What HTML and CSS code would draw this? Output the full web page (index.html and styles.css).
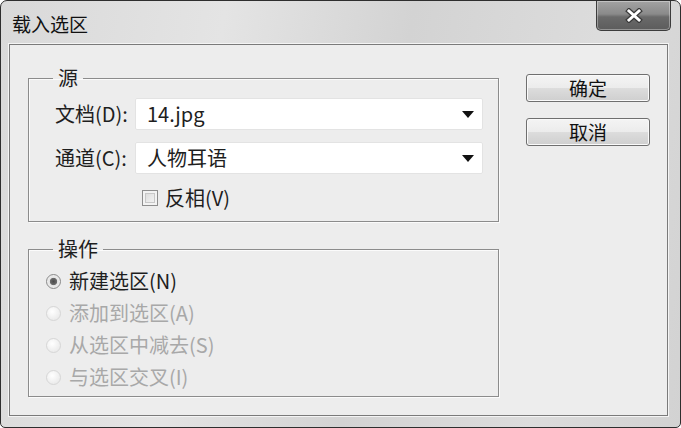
FILE: index.html
```html
<!DOCTYPE html>
<html lang="zh-CN">
<head>
  <meta charset="UTF-8">
  <title>载入选区</title>
  <link rel="stylesheet" href="styles.css">
</head>
<body>
  <div class="window">
    <div class="titlebar">
      <span class="title">载入选区</span>
      <button class="close-btn" aria-label="关闭">
        <svg width="18" height="15" viewBox="0 0 18 15">
          <path d="M4 3 L14 12 M14 3 L4 12" stroke="#3a3a3a" stroke-width="5.4" stroke-linecap="square"/>
          <path d="M4 3 L14 12 M14 3 L4 12" stroke="#ffffff" stroke-width="3" stroke-linecap="square"/>
        </svg>
      </button>
    </div>

    <div class="client">
      <div class="groups">
        <fieldset class="group">
          <legend>源</legend>
          <div class="field-grid">
            <label>文档(D):</label>
            <div class="select">
              <span>14.jpg</span>
              <span class="arrow"></span>
            </div>
            <label>通道(C):</label>
            <div class="select">
              <span>人物耳语</span>
              <span class="arrow"></span>
            </div>
            <div class="check-row">
              <span class="checkbox"></span>
              <span>反相(V)</span>
            </div>
          </div>
        </fieldset>

        <fieldset class="group">
          <legend>操作</legend>
          <div class="radio-list">
            <div class="radio-row">
              <span class="radio checked"></span>
              <span>新建选区(N)</span>
            </div>
            <div class="radio-row disabled">
              <span class="radio"></span>
              <span>添加到选区(A)</span>
            </div>
            <div class="radio-row disabled">
              <span class="radio"></span>
              <span>从选区中减去(S)</span>
            </div>
            <div class="radio-row disabled">
              <span class="radio"></span>
              <span>与选区交叉(I)</span>
            </div>
          </div>
        </fieldset>
      </div>

      <div class="actions">
        <button class="btn">确定</button>
        <button class="btn">取消</button>
      </div>
    </div>
  </div>
</body>
</html>
```

FILE: styles.css
```css
html, body {
  margin: 0;
  padding: 0;
  background-color: #ffffff;
}

body {
  font-family: "Noto Sans CJK SC", "Noto Sans", sans-serif;
  color: #1e1e1e;
}

.window {
  width: 681px;
  height: 428px;
  box-sizing: border-box;
  border: 1px solid #2e2e2e;
  border-radius: 7px 7px 5px 5px;
  background: linear-gradient(100deg, #d9d9d9 0%, #e4e4e4 30%, #d3d3d3 55%, #dcdcdc 80%, #d2d2d2 100%);
  overflow: hidden;
}

.titlebar {
  height: 43px;
  display: flex;
  justify-content: space-between;
  align-items: flex-start;
}

.title {
  font-size: 19px;
  line-height: 20px;
  margin: 13px 0 0 11px;
  color: #111;
}

.close-btn {
  width: 75px;
  height: 30px;
  margin: 0 9px 0 0;
  padding: 0;
  border: 1px solid #3c3c3c;
  border-top: none;
  border-radius: 0 0 5px 5px;
  background: linear-gradient(to bottom, #a3a3a3 0%, #8a8a8a 45%, #6a6a6a 55%, #5c5c5c 100%);
  box-shadow: inset 0 0 0 1px rgba(255,255,255,0.35);
  display: flex;
  align-items: center;
  justify-content: center;
}

.client {
  width: 659px;
  height: 372px;
  box-sizing: border-box;
  margin-left: 8px;
  border: 1px solid #7a7a7a;
  background-color: #ededed;
  display: flex;
  padding: 20px 0 0 18px;
  box-shadow: 0 0 0 1px #f4f4f4;
}

.groups {
  width: 471px;
  display: flex;
  flex-direction: column;
  gap: 14px;
}

.group {
  margin: 0;
  padding: 0;
  border: 1px solid #8c8c8c;
  box-shadow: 1px 1px 0 #fbfbfb, inset 1px 1px 0 #fbfbfb;
  font-size: 20px;
}

.group legend {
  margin-left: 24px;
  padding: 0 5px;
  line-height: 26px;
}

.field-grid {
  display: grid;
  grid-template-columns: 80px 348px;
  row-gap: 12px;
  align-items: center;
  padding: 7px 14px 10px 26px;
}

.field-grid label {
  line-height: 26px;
}

.select {
  height: 32px;
  box-sizing: border-box;
  background-color: #ffffff;
  border: 1px solid #e3e3e3;
  border-radius: 2px;
  display: flex;
  align-items: center;
  justify-content: space-between;
  padding: 0 8px 0 11px;
  line-height: 26px;
}

.arrow {
  width: 0;
  height: 0;
  border-left: 6px solid transparent;
  border-right: 6px solid transparent;
  border-top: 7px solid #111;
}

.check-row {
  grid-column: 2;
  display: flex;
  align-items: center;
  gap: 7px;
  margin: -1px 0 0 7px;
  line-height: 26px;
}

.checkbox {
  width: 14px;
  height: 14px;
  border: 1px solid #8e8e8e;
  background: linear-gradient(135deg, #d6d6d6 0%, #ececec 60%, #f8f8f8 100%);
  box-shadow: inset 0 0 0 2px #f3f3f3, inset 0 0 0 3px #c8c8c8;
}

.radio-list {
  padding: 3px 0 3px 17px;
}

.radio-row {
  height: 32px;
  display: flex;
  align-items: center;
  gap: 8px;
  line-height: 26px;
}

.radio-row.disabled {
  color: #a8a8a8;
}

.radio {
  width: 13px;
  height: 13px;
  border-radius: 50%;
  border: 1px solid #d6d6d6;
  background: radial-gradient(circle at 40% 35%, #ffffff 0%, #ececec 70%);
}

.radio.checked {
  border-color: #8a8a8a;
  background: radial-gradient(circle, #4a4a4a 0%, #6c6c6c 36%, #e4e4e4 44%, #f6f6f6 100%);
}

.actions {
  display: flex;
  flex-direction: column;
  gap: 16px;
  margin: 9px 0 0 27px;
}

.btn {
  width: 124px;
  height: 28px;
  padding: 0;
  font-family: "Noto Sans CJK SC", sans-serif;
  font-size: 19px;
  line-height: 24px;
  color: #111;
  border: 1px solid #6f6f6f;
  border-radius: 3px;
  background: linear-gradient(to bottom, #f4f4f4 0%, #ececec 48%, #dcdcdc 52%, #cfcfcf 100%);
  box-shadow: inset 0 0 0 1px #fafafa;
}
```
